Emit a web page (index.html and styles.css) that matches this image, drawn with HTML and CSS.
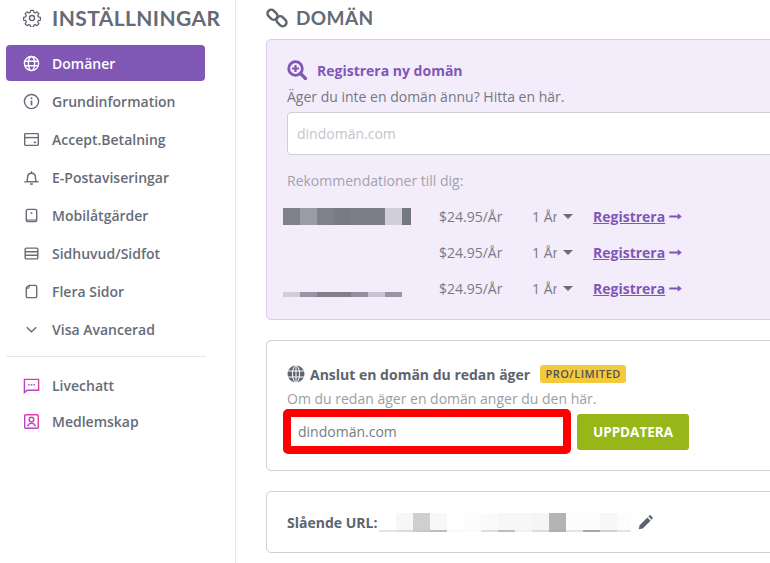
FILE: index.html
```html
<!DOCTYPE html>
<html lang="sv">
<head>
<meta charset="utf-8">
<title>Inställningar</title>
<link rel="stylesheet" href="styles.css">
</head>
<body>
<div class="app">
  <aside class="sidebar">
    <h1 class="title">
      <svg class="title-icon" viewBox="0 0 24 24" fill="none" stroke="currentColor" stroke-width="1.8" stroke-linejoin="round"><circle cx="12" cy="12" r="3.4"/><path d="M10 1.500h4l.6 3 2 .9 2.600-1.700 2.800 2.800-1.700 2.600.9 2 3 .6v4l-3 .6-.9 2 1.700 2.600-2.800 2.800-2.600-1.700-2 .9-.6 3h-4l-.6-3-2-.9-2.600 1.700-2.800-2.800 1.700-2.600-.9-2-3-.6v-4l3-.6.9-2-1.700-2.600 2.800-2.800 2.600 1.700 2-.9z" transform="translate(1 .4) scale(.92)"/></svg>
      <span>INSTÄLLNINGAR</span>
    </h1>
    <nav class="nav">
      <a class="nav-item active">
        <svg class="nav-icon" viewBox="0 0 18 18" fill="none" stroke="currentColor" stroke-width="1.5"><circle cx="9" cy="9" r="7.5"/><ellipse cx="9" cy="9" rx="3.3" ry="7.5"/><path d="M1.8 6.6h14.4M1.8 11.4h14.4"/></svg>
        <span>Domäner</span>
      </a>
      <a class="nav-item">
        <svg class="nav-icon" viewBox="0 0 18 18" fill="none" stroke="currentColor" stroke-width="1.5"><circle cx="9" cy="9" r="7.5"/><path d="M9 8v5" stroke-width="1.8"/><path d="M9 4.7v1.8" stroke-width="1.8"/></svg>
        <span>Grundinformation</span>
      </a>
      <a class="nav-item">
        <svg class="nav-icon" viewBox="0 0 18 18" fill="none" stroke="currentColor" stroke-width="1.5"><rect x="1.800" y="2.800" width="14.400" height="12.400" rx=".8"/><path d="M1.800 7h14.400"/><path d="M11.500 12h2.300" stroke-width="1.800"/></svg>
        <span>Accept.Betalning</span>
      </a>
      <a class="nav-item">
        <svg class="nav-icon" viewBox="0 0 18 18" fill="none" stroke="currentColor" stroke-width="1.5"><path d="M1.500 13.500h15"/><path d="M4 13.200c.8-1 .8-2.400.8-4.200 0-2.700 1.800-4.500 4.200-4.500s4.200 1.800 4.200 4.500c0 1.800 0 3.200.8 4.200"/><path d="M9 2.500v1.800M7.500 15.800h3"/></svg>
        <span>E-Postaviseringar</span>
      </a>
      <a class="nav-item">
        <svg class="nav-icon" viewBox="0 0 18 18" fill="none" stroke="currentColor" stroke-width="1.5"><rect x="3.500" y="2.500" width="11" height="13" rx="1.500"/><path d="M3.800 13.800h10.400" stroke-width="1.200"/><path d="M9 5.500v1.700" stroke-width="1.800"/></svg>
        <span>Mobilåtgärder</span>
      </a>
      <a class="nav-item">
        <svg class="nav-icon" viewBox="0 0 18 18" fill="none" stroke="currentColor" stroke-width="1.5"><rect x="2.300" y="3.300" width="13.400" height="11.400" rx="1.200"/><path d="M2.300 7.200h13.400M2.300 10.800h13.400"/></svg>
        <span>Sidhuvud/Sidfot</span>
      </a>
      <a class="nav-item">
        <svg class="nav-icon" viewBox="0 0 18 18" fill="none" stroke="currentColor" stroke-width="1.5" stroke-linejoin="round"><path d="M6.500 2.500h6.500a1.500 1.500 0 0 1 1.500 1.500v10a1.500 1.500 0 0 1-1.500 1.500h-8a1.500 1.500 0 0 1-1.500-1.500v-9z"/><path d="M6.500 2.500v3h-3" stroke-width="1"/></svg>
        <span>Flera Sidor</span>
      </a>
      <a class="nav-item">
        <svg class="nav-icon" viewBox="0 0 18 18" fill="none" stroke="currentColor" stroke-width="1.500"><path d="M4 6.500l5 5 5-5"/></svg>
        <span>Visa Avancerad</span>
      </a>
    </nav>
    <hr class="divider">
    <nav class="nav nav-extra">
      <a class="nav-item">
        <svg class="nav-icon" viewBox="0 0 18 18" fill="none" stroke="url(#pink)" stroke-width="1.500"><defs><linearGradient id="pink" x1="0" y1="1" x2="1" y2="0"><stop offset="0" stop-color="#a645d6"/><stop offset="1" stop-color="#ee3aa2"/></linearGradient></defs><path d="M1.500 2.500h15v11.500h-12l-3 2.500z"/><path d="M5.500 8.200h1.500M8.300 8.200h1.500M11 8.200h1.500" stroke="#a94bd4" stroke-width="1.800"/></svg>
        <span>Livechatt</span>
      </a>
      <a class="nav-item">
        <svg class="nav-icon" viewBox="0 0 18 18" fill="none" stroke="url(#pink)" stroke-width="1.500"><rect x="1.800" y="1.800" width="14.400" height="14.400" rx="1"/><circle cx="9" cy="7" r="2.500" stroke="#c342bb"/><path d="M4.800 14c.6-2 2.200-3 4.200-3s3.600 1 4.200 3" stroke="#c342bb"/></svg>
        <span>Medlemskap</span>
      </a>
    </nav>
  </aside>
  <main class="main">
    <h2 class="page-title">
      <svg class="page-icon" viewBox="0 0 22 22" fill="none" stroke="currentColor" stroke-width="2.400"><rect x="1" y="4" width="11" height="7.500" rx="3.700" transform="rotate(45 6.500 7.700)"/><rect x="10" y="10.500" width="11" height="7.500" rx="3.700" transform="rotate(45 15.500 14.200)"/></svg>
      <span>DOMÄN</span>
    </h2>
    <section class="card card-purple">
      <div class="register-head">
        <svg class="register-icon" viewBox="0 0 20 20" fill="none" stroke="currentColor" stroke-width="2.800"><circle cx="8.500" cy="8.500" r="6.800"/><path d="M13.500 13.500l5 5" stroke-width="3.200" stroke-linecap="round"/><path d="M8.500 5v7M5 8.500h7" stroke-width="2.200"/></svg>
        <span>Registrera ny domän</span>
      </div>
      <p class="help">Äger du inte en domän ännu? Hitta en här.</p>
      <div class="input input-big">dindomän.com</div>
      <p class="rec-title">Rekommendationer till dig:</p>
      <div class="rec-list">
        <div class="rec-row">
          <div class="rec-name"><i class="blur blur-a"></i></div>
          <span class="rec-price">$24.95/År</span>
          <span class="rec-term">1 År</span><i class="caret"></i>
          <a class="rec-link">Registrera</a>
          <svg class="arrow" viewBox="0 0 14 10" fill="currentColor"><path d="M0 4h9.500V1.500L14 5 9.500 8.500V6H0z"/></svg>
        </div>
        <div class="rec-row">
          <div class="rec-name"></div>
          <span class="rec-price">$24.95/År</span>
          <span class="rec-term">1 År</span><i class="caret"></i>
          <a class="rec-link">Registrera</a>
          <svg class="arrow" viewBox="0 0 14 10" fill="currentColor"><path d="M0 4h9.500V1.500L14 5 9.500 8.500V6H0z"/></svg>
        </div>
        <div class="rec-row">
          <div class="rec-name"><i class="blur blur-b"></i></div>
          <span class="rec-price">$24.95/År</span>
          <span class="rec-term">1 År</span><i class="caret"></i>
          <a class="rec-link">Registrera</a>
          <svg class="arrow" viewBox="0 0 14 10" fill="currentColor"><path d="M0 4h9.500V1.500L14 5 9.500 8.500V6H0z"/></svg>
        </div>
      </div>
    </section>
    <section class="card card-connect">
      <div class="connect-head">
        <svg class="connect-icon" viewBox="0 0 18 18"><circle cx="9" cy="9" r="8.500" fill="currentColor"/><g fill="none" stroke="#fff" stroke-width="1"><ellipse cx="9" cy="9" rx="3.500" ry="8.500"/><path d="M0.500 6h17M0.500 12h17M9 .5v17"/></g></svg>
        <strong>Anslut en domän du redan äger</strong>
        <span class="badge">PRO/LIMITED</span>
      </div>
      <p class="help help-light">Om du redan äger en domän anger du den här.</p>
      <div class="connect-form">
        <div class="input input-red">dindomän.com</div>
        <button class="btn">UPPDATERA</button>
      </div>
    </section>
    <section class="card card-url">
      <strong>Slående URL:</strong>
      <i class="blur blur-url"></i>
      <svg class="pencil" viewBox="0 0 16 16" fill="currentColor"><path d="M.8 15.200l.9-4.300 8.300-8.300 3.400 3.400-8.300 8.300zM11 1.600l1-1c.5-.5 1.200-.5 1.700 0l1.700 1.700c.5.500.5 1.200 0 1.700l-1 1z"/></svg>
    </section>
  </main>
</div>
</body>
</html>
```
FILE: styles.css
```css
* { box-sizing: border-box; }
html, body { margin: 0; padding: 0; height: 100%; overflow: hidden; background: #fff; }
body { font-family: "Open Sans", sans-serif; color: #5d6470; font-size: 14px; }
p, h1, h2 { margin: 0; }
.app { display: flex; width: 770px; height: 563px; overflow: hidden; }

.sidebar { flex: 0 0 236px; min-width: 0; width: 236px; height: 563px; padding: 0 0 0 6px; border-right: 1px solid #e8e8ea; }
.title { display: flex; align-items: center; gap: 11px; height: 35px; padding-left: 17px; font: 700 21px/35px Lato, sans-serif; letter-spacing: .4px; color: #646b75; white-space: nowrap; }
.title-icon { width: 18px; height: 18px; color: #5d6470; flex: none; }
.nav { display: flex; flex-direction: column; gap: 2px; margin-top: 10px; }
.nav-item { display: flex; align-items: center; gap: 12px; height: 36px; width: 199px; padding-left: 17px; font-weight: 600; font-size: 14px; color: #666c78; border-radius: 4px; white-space: nowrap; }
.nav-item.active { background: #8157b6; color: #fff; }
.nav-icon { width: 17px; height: 17px; flex: none; }
.divider { width: 200px; height: 1px; margin: 9px 0 0; border: 0; background: #e8e8ea; }
.nav-extra { gap: 0; margin-top: 10px; }

.main { flex: none; width: 534px; padding-left: 30px; }
.page-title { display: flex; align-items: center; gap: 8px; height: 35px; font: 700 19px/35px Lato, sans-serif; letter-spacing: .4px; color: #646b75; }
.page-icon { width: 22px; height: 22px; color: #5d6470; flex: none; }
.card { width: 520px; border: 1px solid #cfcfd4; border-radius: 5px; background: #fff; }
.card-purple { height: 281px; margin-top: 4px; padding: 19px 0 0 20px; background: #f3ecfb; border-color: #d9cceb; }
.register-head { display: flex; align-items: center; gap: 10px; height: 22px; font-weight: 700; font-size: 14px; color: #8157b6; }
.register-icon { width: 20px; height: 20px; flex: none; }
.help { margin-top: 6px; line-height: 20px; font-size: 14px; color: #737883; }
.input { background: #fff; border-radius: 4px; font-size: 14px; }
.input-big { height: 43px; margin-top: 5px; padding-left: 9px; line-height: 41px; border: 1px solid #cfcfd6; color: #c3c5cb; }
.rec-title { margin-top: 16px; line-height: 20px; color: #a1a3ac; }
.rec-list { display: flex; flex-direction: column; margin-top: 7px; }
.rec-row { display: flex; align-items: center; height: 36px; margin-left: -4px; color: #777b85; }
.rec-name { flex: none; width: 156px; height: 17px; }
.blur { display: block; }
.blur-a { width: 128px; height: 17px; background: linear-gradient(90deg, #7f8089 0 17px, #9c9ca6 17px 34px, #7f8089 34px 51px, #787a85 51px 68px, #7c7e88 68px 102px, #cfced9 102px 119px, #757783 119px); }
.blur-b { width: 119px; height: 5px; margin-top: 12px; background: linear-gradient(90deg, #cfced9 0 17px, #9695a3 17px 34px, #7f8089 34px 68px, #918f9e 68px 85px, #c6c3d2 85px 102px, #9695a3 102px); }
.rec-price { flex: none; width: 93px; font-size: 14px; }
.rec-term { flex: none; width: 25px; overflow: hidden; white-space: nowrap; font-size: 14px; }
.caret { flex: none; width: 0; height: 0; margin: 0 20px 0 6px; border: 5px solid transparent; border-top: 5px solid #6a6e79; border-bottom: 0; }
.rec-link { flex: none; font-weight: 700; font-size: 14px; color: #8157b6; text-decoration: underline; }
.arrow { width: 13px; height: 9px; margin-left: 4px; color: #8157b6; flex: none; }

.card-connect { height: 131px; margin-top: 20px; padding: 22px 16px 0 20px; }
.connect-head { display: flex; align-items: center; height: 22px; }
.connect-head strong { margin-left: 5px; font-size: 14px; font-weight: 700; color: #5d6470; }
.connect-icon { width: 18px; height: 18px; color: #5d6470; flex: none; }
.badge { margin-left: 10px; width: 86px; height: 18px; line-height: 18px; text-align: center; font-size: 11px; font-weight: 600; letter-spacing: .5px; background: #f4c93c; color: #4f5257; border-radius: 3px; }
.help-light { margin-top: 4px; color: #9a9da6; }
.connect-form { display: flex; align-items: center; gap: 6px; margin-top: 0; margin-left: -4px; }
.input-red { flex: none; width: 288px; height: 45px; padding-left: 7px; line-height: 29px; border: 8px solid #ff0000; border-radius: 5px; color: #767b86; }
.btn { flex: none; width: 112px; height: 36px; padding: 0; border: 0; border-radius: 3px; background: #97b719; color: #fff; font: 700 13.5px "Open Sans", sans-serif; }
.card-url { display: flex; align-items: center; height: 62px; margin-top: 20px; padding-left: 20px; }
.card-url strong { font-size: 14px; color: #5d6470; font-weight: 700; }
.blur-url { flex: none; width: 252px; height: 19px; margin-left: 2px; background:
  linear-gradient(90deg, #e4e4e4 0 17px, #dadada 17px 34px, #c8c8c8 34px 51px, #bdbdbd 51px 68px, #fafafa 68px 102px, #dedede 102px 119px, #bebebe 119px 136px, #f2f2f2 136px 153px, #dcdcdc 153px 170px, #aeb0b2 170px 187px, #e4e4e4 187px 204px, #a8a8a8 204px 221px, #cfcfcf 221px 238px, #e4e4e4 238px) 0 100% / 100% 2px no-repeat,
  linear-gradient(90deg, #fff 0 17px, #f7f7f7 17px 34px, #cdcfd1 34px 51px, #f8f8f8 51px 68px, #fff 68px 85px, #fcfcfc 85px 102px, #fafafa 102px 119px, #f7f7f7 119px 153px, #f5f5f5 153px 170px, #b2b4b6 170px 187px, #fcfcfc 187px 221px, #f7f7f7 221px 238px, #fcfcfc 238px); }
.pencil { width: 15px; height: 15px; margin-left: 7px; color: #5d6470; flex: none; }
```
